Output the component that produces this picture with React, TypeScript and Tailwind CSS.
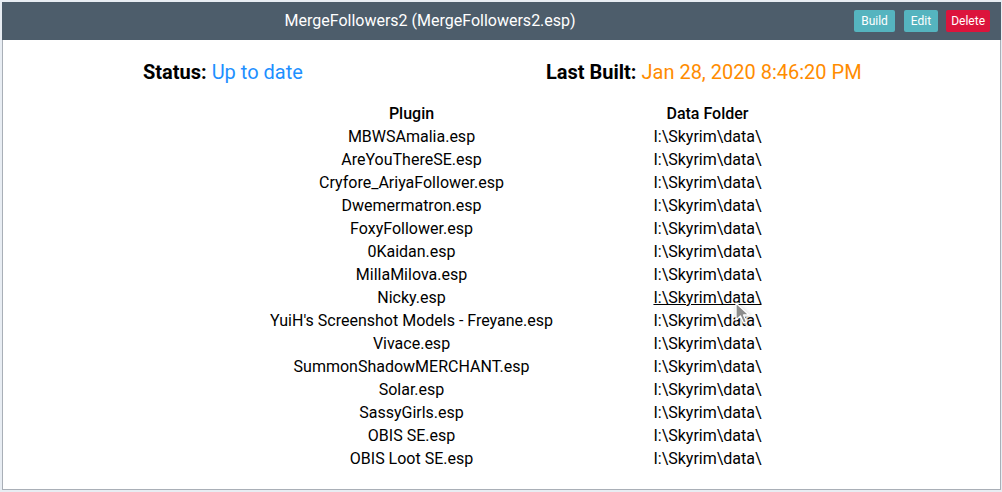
import React from 'react';

const plugins = [
  'MBWSAmalia.esp',
  'AreYouThereSE.esp',
  'Cryfore_AriyaFollower.esp',
  'Dwemermatron.esp',
  'FoxyFollower.esp',
  '0Kaidan.esp',
  'MillaMilova.esp',
  'Nicky.esp',
  "YuiH's Screenshot Models - Freyane.esp",
  'Vivace.esp',
  'SummonShadowMERCHANT.esp',
  'Solar.esp',
  'SassyGirls.esp',
  'OBIS SE.esp',
  'OBIS Loot SE.esp',
];

const Cursor: React.FC = () => (
  <svg className="absolute left-[734px] top-[302px] pointer-events-none drop-shadow-[1px_2px_2px_rgba(0,0,0,0.25)]" width="20" height="24" viewBox="0 0 20 24">
    <path d="M2 1 L2 18 L6.5 14 L9.5 21 L12.5 19.8 L9.5 13 L15 13 Z" fill="#8c8c8c" stroke="#ffffff" strokeWidth="1.3" strokeLinejoin="round" />
  </svg>
);

const App: React.FC = () => {
  return (
    <div className="w-[1002px] h-[492px] bg-[#e8edf3] font-['Roboto',sans-serif] relative overflow-hidden">
      <div className="ml-[2px] mt-[2px] w-[999px] h-[488px] bg-white border-x border-b border-[#a9afb7] flex flex-col">
        {/* Title bar */}
        <div className="h-[38px] shrink-0 bg-[#4d5d6b] flex items-center -mx-px">
          <div className="flex-1 text-center text-white text-[16px] pl-[4px]">MergeFollowers2 (MergeFollowers2.esp)</div>
          <div className="flex items-center pr-[11px]">
            <button className="h-[22px] px-[7px] rounded-[2px] bg-[#55b4bf] text-white text-[12px]">Build</button>
            <button className="ml-[9px] h-[22px] px-[7px] rounded-[2px] bg-[#55b4bf] text-white text-[12px]">Edit</button>
            <button className="ml-[8px] h-[22px] px-[5px] rounded-[2px] bg-[#dc143c] text-white text-[12px]">Delete</button>
          </div>
        </div>

        {/* Status line */}
        <div className="flex items-center shrink-0 mt-[19px] h-[26px] text-[20px]">
          <div className="ml-[140px] w-[403px]">
            <span className="font-bold text-black">Status:</span> <span className="text-[#1e90ff]">Up to date</span>
          </div>
          <div>
            <span className="font-bold text-black">Last Built:</span> <span className="text-[#ff8c00]">Jan 28, 2020 8:46:20 PM</span>
          </div>
        </div>

        {/* Plugin table */}
        <table className="mx-auto mt-[17px] text-[16px] leading-[23px] text-black border-collapse">
          <thead>
            <tr className="h-[23px]">
              <th className="w-[412px] p-0 font-medium text-[16px] text-center">Plugin</th>
              <th className="w-[180px] p-0 font-medium text-[16px] text-center">Data Folder</th>
            </tr>
          </thead>
          <tbody>
            {plugins.map((p, i) => (
              <tr key={p} className="h-[23px]">
                <td className="p-0 text-center">{p}</td>
                <td className={i === 7 ? 'p-0 text-center underline' : 'p-0 text-center'}>I:\Skyrim\data\</td>
              </tr>
            ))}
          </tbody>
        </table>
      </div>
      <Cursor />
    </div>
  );
};

export default App;
